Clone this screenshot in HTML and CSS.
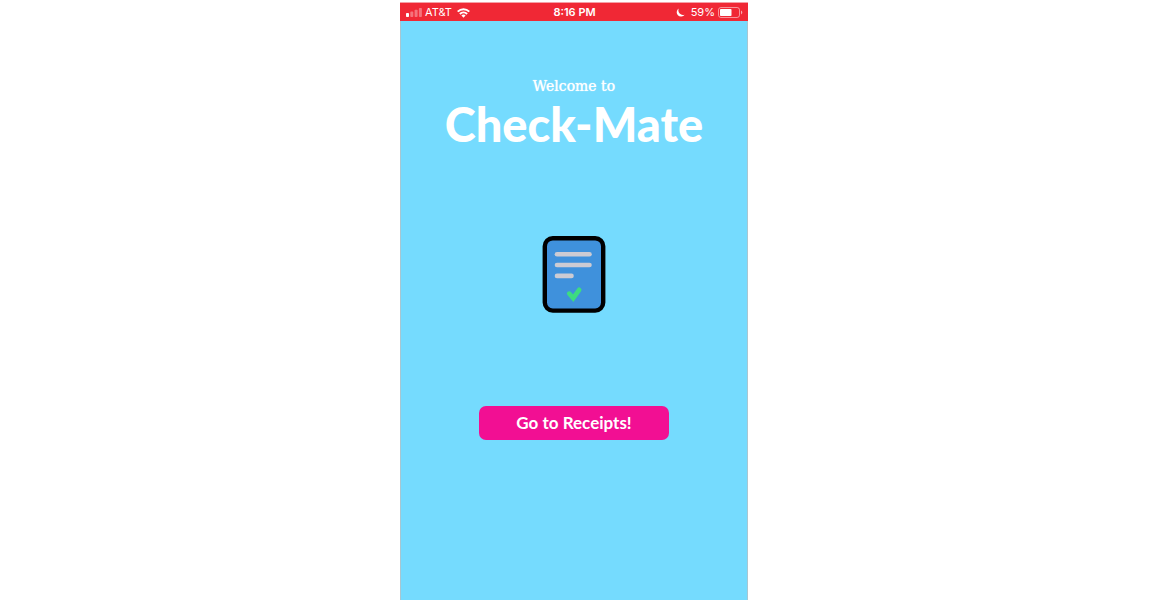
FILE: index.html
```html
<!DOCTYPE html>
<html lang="en">
<head>
<meta charset="utf-8">
<meta name="viewport" content="width=device-width, initial-scale=1">
<title>Check-Mate</title>
<link rel="stylesheet" href="styles.css">
</head>
<body>
<div class="phone">
  <header class="status">
    <div class="status-group">
      <svg class="signal" width="16" height="9" viewBox="0 0 16 9" aria-hidden="true">
        <rect x="0" y="5" width="3" height="4" rx="0.8" fill="#fff"/>
        <g fill="#fff" opacity="0.35">
          <rect x="4.3" y="3.6" width="3" height="5.4" rx="0.8"/>
          <rect x="8.6" y="1.8" width="3" height="7.2" rx="0.8"/>
          <rect x="12.9" y="0" width="3" height="9" rx="0.8"/>
        </g>
      </svg>
      <span>AT&amp;T</span>
      <svg class="wifi" width="13" height="10" viewBox="0 0 13 10" fill="none" stroke="#fff" stroke-width="2" aria-hidden="true">
        <path d="M0.7 3.6C4 0.4 9 0.4 12.3 3.6"/>
        <path d="M2.9 6C4.9 4 8.1 4 10.1 6"/>
        <path d="M4.4 7.4C5.6 6.3 7.4 6.3 8.6 7.4L6.5 9.8Z" fill="#fff" stroke="none"/>
      </svg>
    </div>
    <time class="clock">8:16 PM</time>
    <div class="status-group status-right">
      <svg width="9" height="9" viewBox="0 0 10 10" aria-hidden="true">
        <path d="M3.2 0.6A4.8 4.8 0 1 0 9.6 7.4A5 5 0 0 1 3.2 0.6Z" fill="#fff"/>
      </svg>
      <span class="percent">59%</span>
      <svg width="25" height="11" viewBox="0 0 25 11" aria-hidden="true">
        <rect x="0.5" y="0.5" width="21" height="10" rx="2.4" fill="none" stroke="#fff" stroke-opacity="0.5"/>
        <rect x="2" y="2" width="11.5" height="7" rx="0.8" fill="#fff"/>
        <path d="M23 3.6C24.8 4.2 24.8 6.8 23 7.4Z" fill="#fff" fill-opacity="0.6"/>
      </svg>
    </div>
  </header>
  <main class="welcome">
    <p class="greeting">Welcome to</p>
    <h1 class="brand">Check-Mate</h1>
    <svg class="receipt" width="64" height="77" viewBox="0 0 64 77" role="img" aria-label="Receipt">
      <rect x="2.8" y="2.2" width="58.4" height="72.4" rx="8" fill="#3f91dc" stroke="#000" stroke-width="4.4"/>
      <g stroke="#cccbd3" stroke-width="4.6" stroke-linecap="round">
        <path d="M15 18.3H47.5"/>
        <path d="M15 29H47.5"/>
        <path d="M15 39.9H29.5"/>
      </g>
      <path d="M27.2 57.6L31.2 62.2L37.2 53.8" fill="none" stroke="#3ddc80" stroke-width="4.6" stroke-linecap="round" stroke-linejoin="miter"/>
    </svg>
    <button class="go" type="button">Go to Receipts!</button>
  </main>
</div>
</body>
</html>
```
FILE: styles.css
```css
* {
  box-sizing: border-box;
}

body {
  margin: 0;
  padding: 2px 2px 0 0;
  min-height: 100vh;
  display: flex;
  justify-content: center;
  background: #fff;
  font-family: Inter, "Liberation Sans", sans-serif;
}

.phone {
  display: flex;
  flex-direction: column;
  width: 100%;
  max-width: 348px;
  background: #75dbfe;
  border: solid #a9c6d1;
  border-width: 0 1px;
}

.status {
  display: grid;
  grid-template-columns: 1fr auto 1fr;
  align-items: center;
  margin: 0 -1px;
  padding: 1px 5px 0 6px;
  background: #f02835;
  border-top: 1px solid #f5a0a6;
  color: #fff;
  font-size: 11px;
  line-height: 17px;
}

.status-group {
  display: flex;
  align-items: center;
  gap: 3px;
}

.status-right {
  justify-content: flex-end;
}

.wifi {
  margin-left: 2px;
}

.percent {
  margin-left: 3px;
}

.clock {
  font-weight: 600;
}

.welcome {
  display: flex;
  flex-direction: column;
  align-items: center;
  padding-top: 55px;
  color: #fff;
}

.greeting {
  margin: 0;
  font-family: "American Typewriter", "DejaVu Serif", serif;
  font-size: 14px;
  line-height: 20px;
  text-shadow: 0 0 1px #fff;
}

.brand {
  margin: 0;
  font-family: "Marker Felt", Lato, sans-serif;
  font-size: 47px;
  font-weight: 900;
  line-height: 56px;
}

.receipt {
  margin-top: 84px;
}

.go {
  width: 190px;
  margin-top: 93px;
  padding: 0;
  border: 0;
  border-radius: 7px;
  background: #f20f93;
  color: #fff;
  font-family: "Avenir Next", Lato, sans-serif;
  font-size: 17px;
  font-weight: 700;
  line-height: 34px;
}
```
